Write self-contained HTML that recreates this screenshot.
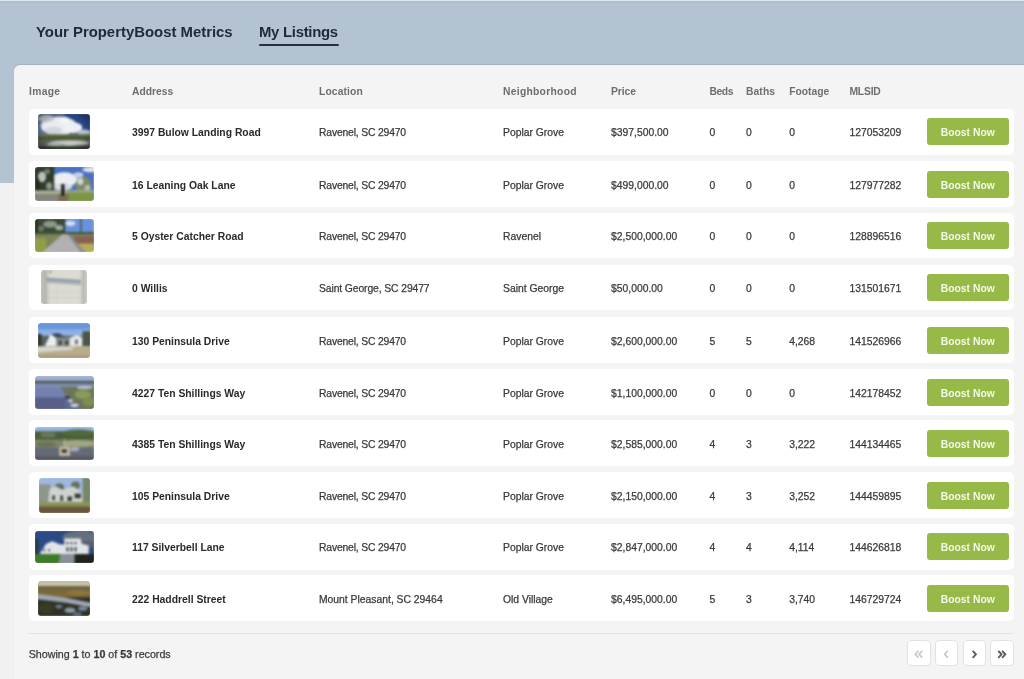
<!DOCTYPE html>
<html><head><meta charset="utf-8"><style>
*{margin:0;padding:0;box-sizing:border-box}
html,body{width:1024px;height:679px;overflow:hidden}
body{background:#f1f1f1;font-family:"Liberation Sans",sans-serif;position:relative}
#wrap{position:absolute;left:0;top:0;width:1024px;height:679px;overflow:hidden;will-change:transform}
.band{position:absolute;left:0;top:0;width:1024px;height:183px;background:#b3c3d1}
.topline{position:absolute;left:0;top:0;width:1024px;height:1px;background:#d9e8f1}.topline2{position:absolute;left:0;top:1px;width:1024px;height:2px;background:#afc0c8}
.tab{position:absolute;font-weight:bold;color:#1f2a36;font-size:14.9px;white-space:nowrap;line-height:1}
.ul{position:absolute;left:259px;top:43.5px;width:79.5px;height:2.5px;background:#253140;border-radius:1px}
.card{position:absolute;left:14px;top:65px;width:1030px;height:640px;background:#f4f4f4;border-radius:6px;box-shadow:0 -0.5px 1px rgba(0,0,0,.1)}
.th{position:absolute;font-weight:bold;color:#6e6e6e;font-size:10.3px;white-space:nowrap;line-height:1}
.row{position:absolute;left:28.5px;width:985.5px;height:45.9px;background:#fff;border-radius:5px}
.td{position:absolute;color:#3a3a3a;font-size:10.35px;white-space:nowrap;line-height:1;-webkit-text-stroke:0.25px #3a3a3a}
.td.b{font-weight:bold;color:#2a2a2a;font-size:10.35px;-webkit-text-stroke:0}
.img{position:absolute;border-radius:3px;overflow:hidden}.img svg{display:block;position:absolute;left:-1px;top:-1px;width:calc(100% + 2px);height:calc(100% + 2px);filter:blur(0.85px)}
.btn{position:absolute;left:927px;width:81.5px;height:27.3px;background:#96b948;border-radius:3px;color:#f5f9ea;font-weight:bold;font-size:10.35px;text-align:center;line-height:29px;white-space:nowrap}
.sep{position:absolute;left:28px;top:633px;width:985px;height:1px;background:#e3e3e3}
.foot{position:absolute;left:28.7px;color:#3a3a3a;font-size:10.7px;white-space:nowrap;line-height:1;-webkit-text-stroke:0.25px #3a3a3a}
.pg{position:absolute;top:640.3px;width:23.5px;height:25.8px;background:#fff;border:1px solid #e2e2e2;border-radius:4px}
.pg svg{position:absolute;left:0;top:0}
</style></head><body><div id="wrap">
<svg width="0" height="0" style="position:absolute"><filter id="bl" x="0" y="0" width="100%" height="100%" filterUnits="objectBoundingBox"><feGaussianBlur stdDeviation="0.75" edgeMode="duplicate"/></filter><radialGradient id="vg" cx="50%" cy="50%" r="60%"><stop offset="65%" stop-color="#000" stop-opacity="0"/><stop offset="100%" stop-color="#000" stop-opacity="0.3"/></radialGradient></svg>
<div class="band"></div><div class="topline"></div><div class="topline2"></div>
<div class="tab" style="left:36px;top:25px">Your PropertyBoost Metrics</div>
<div class="tab" style="left:259px;top:25px;letter-spacing:-0.28px">My Listings</div>
<div class="ul"></div>
<div class="card"></div>
<div class="th" style="left:29px;top:87.4px;letter-spacing:0.309px">Image</div>
<div class="th" style="left:132px;top:87.4px;letter-spacing:0.016px">Address</div>
<div class="th" style="left:319px;top:87.4px;letter-spacing:0.113px">Location</div>
<div class="th" style="left:503px;top:87.4px;letter-spacing:0.286px">Neighborhood</div>
<div class="th" style="left:611px;top:87.4px;letter-spacing:-0.051px">Price</div>
<div class="th" style="left:709.5px;top:87.4px;letter-spacing:-0.396px">Beds</div>
<div class="th" style="left:746px;top:87.4px;letter-spacing:0.098px">Baths</div>
<div class="th" style="left:789.2px;top:87.4px;letter-spacing:-0.008px">Footage</div>
<div class="th" style="left:849.4px;top:87.4px;letter-spacing:-0.162px">MLSID</div>
<div class="row" style="top:108.70px"></div>
<div class="img" style="left:38.1px;top:114.2px;width:52.3px;height:34.8px"><svg viewBox="0 0 60 40" preserveAspectRatio="none"><rect width="60" height="40" fill="#2a4888"/>
<rect x="0" y="0" width="30" height="25" fill="#5a6e94"/>
<ellipse cx="24" cy="14" rx="20" ry="10" fill="#e9ecf0"/>
<ellipse cx="10" cy="6" rx="9" ry="4" fill="#c4cad4"/>
<ellipse cx="40" cy="16" rx="10" ry="6" fill="#eef0f3"/>
<ellipse cx="30" cy="8" rx="6" ry="4" fill="#f4f5f6"/>
<ellipse cx="52" cy="21" rx="8" ry="3" fill="#b8c2d4"/>
<ellipse cx="18" cy="19" rx="10" ry="4" fill="#d2d6dc"/>
<rect x="0" y="23.5" width="60" height="6" fill="#4a5834"/>
<rect x="0" y="23" width="60" height="2" fill="#6a7a52"/>
<rect x="0" y="29" width="60" height="11" fill="#5e665c"/>
<ellipse cx="36" cy="32.5" rx="22" ry="3" fill="#c4c8c2"/>
<ellipse cx="20" cy="34" rx="10" ry="2" fill="#a8aca6"/>
<rect x="0" y="37" width="60" height="3" fill="#262a24"/><rect width="60" height="40" fill="url(#vg)"/></svg></div>
<div class="td b" style="left:132px;top:128.10px">3997 Bulow Landing Road</div>
<div class="td" style="left:319px;top:128.10px;letter-spacing:-0.165px">Ravenel, SC 29470</div>
<div class="td" style="left:503px;top:128.10px">Poplar Grove</div>
<div class="td" style="left:611px;top:128.10px">$397,500.00</div>
<div class="td" style="left:709.5px;top:128.10px">0</div>
<div class="td" style="left:746px;top:128.10px">0</div>
<div class="td" style="left:789.2px;top:128.10px">0</div>
<div class="td" style="left:849.4px;top:128.10px">127053209</div>
<div class="btn" style="top:118.00px">Boost Now</div>
<div class="row" style="top:161.30px"></div>
<div class="img" style="left:35.2px;top:167.0px;width:58.5px;height:34.1px"><svg viewBox="0 0 60 40" preserveAspectRatio="none"><rect width="60" height="40" fill="#4a70c0"/>
<ellipse cx="56" cy="4" rx="8" ry="3" fill="#dfe6f2"/>
<ellipse cx="30" cy="15" rx="13" ry="8" fill="#eceef2"/>
<ellipse cx="28" cy="23" rx="10" ry="4" fill="#d8dce2"/>
<ellipse cx="44" cy="10" rx="5" ry="3" fill="#c8d2e6"/>
<rect x="0" y="0" width="20" height="31" fill="#2e3a2a"/>
<ellipse cx="8" cy="12" rx="4" ry="6" fill="#b8c0b8"/>
<ellipse cx="15" cy="22" rx="3" ry="4" fill="#8e9a8a"/>
<ellipse cx="13" cy="6" rx="3" ry="3" fill="#6e7e6a"/>
<rect x="3" y="14" width="2" height="16" fill="#1a2018"/>
<ellipse cx="49" cy="21" rx="8" ry="9" fill="#7a8c68"/>
<ellipse cx="46" cy="17" rx="3" ry="4" fill="#d0d6d0"/>
<ellipse cx="53" cy="24" rx="3" ry="3" fill="#b6c0ae"/>
<rect x="0" y="27" width="60" height="4" fill="#a8b092"/>
<rect x="32" y="29" width="28" height="11" fill="#7c9648"/>
<rect x="0" y="31" width="26" height="9" fill="#86847c"/>
<rect x="24" y="31" width="10" height="9" fill="#7e6a52"/>
<rect x="27" y="20" width="3.2" height="13" fill="#161a16"/></svg></div>
<div class="td b" style="left:132px;top:180.70px">16 Leaning Oak Lane</div>
<div class="td" style="left:319px;top:180.70px;letter-spacing:-0.165px">Ravenel, SC 29470</div>
<div class="td" style="left:503px;top:180.70px">Poplar Grove</div>
<div class="td" style="left:611px;top:180.70px">$499,000.00</div>
<div class="td" style="left:709.5px;top:180.70px">0</div>
<div class="td" style="left:746px;top:180.70px">0</div>
<div class="td" style="left:789.2px;top:180.70px">0</div>
<div class="td" style="left:849.4px;top:180.70px">127977282</div>
<div class="btn" style="top:170.60px">Boost Now</div>
<div class="row" style="top:212.60px"></div>
<div class="img" style="left:35.2px;top:218.8px;width:58.5px;height:33.2px"><svg viewBox="0 0 60 40" preserveAspectRatio="none"><rect width="60" height="40" fill="#6a92dc"/>
<ellipse cx="36" cy="6" rx="5" ry="3" fill="#d4e0f4"/>
<rect x="0" y="0" width="31" height="17" fill="#3a4834"/>
<ellipse cx="16" cy="7" rx="7" ry="4" fill="#8c968a"/>
<ellipse cx="25" cy="11" rx="4" ry="3" fill="#a0a8a0"/>
<ellipse cx="7" cy="12" rx="3" ry="3" fill="#707a6c"/>
<rect x="0" y="0" width="4" height="26" fill="#26341f"/>
<rect x="46" y="0" width="1.2" height="18" fill="#3a4a34"/>
<rect x="0" y="16" width="60" height="3" fill="#3e5632"/>
<rect x="0" y="18.5" width="60" height="21.5" fill="#7c8658"/>
<rect x="40" y="21" width="20" height="9" fill="#8a5e52"/>
<rect x="44" y="29" width="16" height="11" fill="#b4ae56"/>
<rect x="0" y="23" width="12" height="17" fill="#909e46"/>
<polygon points="28.5,18.5 33,18.5 48,40 7,40" fill="#b2b0b2"/>
<polygon points="33,18.5 35,18.5 52,40 47,40" fill="#8c8a92"/></svg></div>
<div class="td b" style="left:132px;top:232.00px">5 Oyster Catcher Road</div>
<div class="td" style="left:319px;top:232.00px;letter-spacing:-0.165px">Ravenel, SC 29470</div>
<div class="td" style="left:503px;top:232.00px">Ravenel</div>
<div class="td" style="left:611px;top:232.00px">$2,500,000.00</div>
<div class="td" style="left:709.5px;top:232.00px">0</div>
<div class="td" style="left:746px;top:232.00px">0</div>
<div class="td" style="left:789.2px;top:232.00px">0</div>
<div class="td" style="left:849.4px;top:232.00px">128896516</div>
<div class="btn" style="top:221.90px">Boost Now</div>
<div class="row" style="top:264.60px"></div>
<div class="img" style="left:40.6px;top:269.7px;width:46.9px;height:34.6px"><svg viewBox="0 0 60 40" preserveAspectRatio="none"><rect width="60" height="40" fill="#dcdbd3"/>
<rect x="0" y="0" width="9" height="40" fill="#bdbcb6"/>
<rect x="50" y="0" width="10" height="40" fill="#c6c6c0"/>
<rect x="53" y="0" width="0.7" height="40" fill="#9a9a94"/>
<rect x="6" y="0" width="0.7" height="40" fill="#9e9c96"/>
<rect x="10" y="0" width="0.5" height="40" fill="#aaa8a2"/>
<polygon points="8,9.5 50,12 50,17.5 8,15" fill="#a6aeb8"/>
<polygon points="8,10 50,12.5 50,13.8 8,11.3" fill="#7a828c"/>
<rect x="10" y="25" width="40" height="0.5" fill="#c4c4bc"/>
<rect x="10" y="31" width="40" height="0.5" fill="#c4c4bc"/>
<rect x="20" y="18" width="0.5" height="22" fill="#c8c8c0"/>
<rect x="12" y="2" width="2" height="2" fill="#6e6e6a"/></svg></div>
<div class="td b" style="left:132px;top:284.00px">0 Willis</div>
<div class="td" style="left:319px;top:284.00px;letter-spacing:-0.1px">Saint George, SC 29477</div>
<div class="td" style="left:503px;top:284.00px">Saint George</div>
<div class="td" style="left:611px;top:284.00px">$50,000.00</div>
<div class="td" style="left:709.5px;top:284.00px">0</div>
<div class="td" style="left:746px;top:284.00px">0</div>
<div class="td" style="left:789.2px;top:284.00px">0</div>
<div class="td" style="left:849.4px;top:284.00px">131501671</div>
<div class="btn" style="top:273.90px">Boost Now</div>
<div class="row" style="top:317.20px"></div>
<div class="img" style="left:37.7px;top:323.1px;width:52.7px;height:34.9px"><svg viewBox="0 0 60 40" preserveAspectRatio="none"><rect width="60" height="40" fill="#6a94dc"/>
<rect x="0" y="8" width="60" height="8" fill="#8eb0e4"/>
<rect x="0" y="15" width="60" height="12" fill="#58625e"/>
<rect x="0" y="13" width="5" height="15" fill="#2e3a30"/>
<polygon points="8,27 15,13 21,17 21,27" fill="#eceeee"/>
<polygon points="15,13 24,12 32,17 21,17" fill="#404a58"/>
<rect x="21" y="17" width="18" height="10" fill="#8a928c"/>
<rect x="24" y="20" width="3" height="5" fill="#3a4040"/>
<rect x="31" y="20" width="3" height="5" fill="#3a4040"/>
<polygon points="36,17 44,14 50,17 50,27 36,27" fill="#e6e8e8"/>
<rect x="42" y="19" width="2.5" height="5" fill="#505860"/>
<rect x="50" y="10" width="10" height="18" fill="#4a5646"/>
<rect x="0" y="26" width="60" height="14" fill="#b8ac8c"/>
<polygon points="0,27 42,27 38,30 0,33" fill="#d6d6d2"/>
<rect x="0" y="36" width="60" height="4" fill="#aa9c7c"/></svg></div>
<div class="td b" style="left:132px;top:336.60px">130 Peninsula Drive</div>
<div class="td" style="left:319px;top:336.60px;letter-spacing:-0.165px">Ravenel, SC 29470</div>
<div class="td" style="left:503px;top:336.60px">Poplar Grove</div>
<div class="td" style="left:611px;top:336.60px">$2,600,000.00</div>
<div class="td" style="left:709.5px;top:336.60px">5</div>
<div class="td" style="left:746px;top:336.60px">5</div>
<div class="td" style="left:789.2px;top:336.60px">4,268</div>
<div class="td" style="left:849.4px;top:336.60px">141526966</div>
<div class="btn" style="top:326.50px">Boost Now</div>
<div class="row" style="top:369.30px"></div>
<div class="img" style="left:34.9px;top:375.7px;width:58.8px;height:33.6px"><svg viewBox="0 0 60 40" preserveAspectRatio="none"><rect width="60" height="40" fill="#5e6890"/>
<rect x="0" y="0" width="60" height="7" fill="#9eb0d0"/>
<rect x="0" y="6.5" width="60" height="3" fill="#4e585c"/>
<rect x="0" y="9.5" width="60" height="6" fill="#7e8cac"/>
<rect x="0" y="15" width="36" height="10" fill="#7480b0"/>
<polygon points="26,14 60,12 60,40 50,40 36,28" fill="#6a7658"/>
<ellipse cx="48" cy="22" rx="8" ry="5" fill="#8a9a5a"/>
<ellipse cx="54" cy="30" rx="6" ry="5" fill="#7e8e4e"/>
<ellipse cx="50" cy="14" rx="8" ry="2" fill="#b8bcc8"/>
<ellipse cx="33" cy="25" rx="3" ry="1.5" fill="#38383c"/>
<ellipse cx="36" cy="29" rx="2.5" ry="2" fill="#c8c8d0"/>
<ellipse cx="40" cy="34" rx="4" ry="2" fill="#d2d2d6"/>
<rect x="0" y="26" width="30" height="14" fill="#58608a"/></svg></div>
<div class="td b" style="left:132px;top:388.70px">4227 Ten Shillings Way</div>
<div class="td" style="left:319px;top:388.70px;letter-spacing:-0.165px">Ravenel, SC 29470</div>
<div class="td" style="left:503px;top:388.70px">Poplar Grove</div>
<div class="td" style="left:611px;top:388.70px">$1,100,000.00</div>
<div class="td" style="left:709.5px;top:388.70px">0</div>
<div class="td" style="left:746px;top:388.70px">0</div>
<div class="td" style="left:789.2px;top:388.70px">0</div>
<div class="td" style="left:849.4px;top:388.70px">142178452</div>
<div class="btn" style="top:378.60px">Boost Now</div>
<div class="row" style="top:420.30px"></div>
<div class="img" style="left:35.2px;top:426.6px;width:58.5px;height:33.2px"><svg viewBox="0 0 60 40" preserveAspectRatio="none"><rect width="60" height="40" fill="#98b6e4"/>
<rect x="0" y="6" width="60" height="10" fill="#4a5e38"/>
<ellipse cx="44" cy="8" rx="16" ry="4" fill="#4e6a3a"/>
<ellipse cx="14" cy="10" rx="8" ry="3" fill="#6a7a5a"/>
<rect x="0" y="15.5" width="60" height="9.5" fill="#7e866a"/>
<ellipse cx="44" cy="20" rx="16" ry="4" fill="#a0a682"/>
<ellipse cx="12" cy="21" rx="10" ry="3" fill="#6c7258"/>
<rect x="0" y="24.5" width="60" height="15.5" fill="#646a78"/>
<rect x="0" y="34" width="60" height="6" fill="#585a62"/>
<polygon points="25,24 35,23 36,34 25,34" fill="#c4baa2"/>
<rect x="27.5" y="26.5" width="5" height="4" fill="#383838"/>
<rect x="30" y="14" width="0.8" height="10" fill="#c8c0b0"/>
<ellipse cx="40" cy="26.5" rx="5" ry="2.5" fill="#a8acba"/></svg></div>
<div class="td b" style="left:132px;top:439.70px">4385 Ten Shillings Way</div>
<div class="td" style="left:319px;top:439.70px;letter-spacing:-0.165px">Ravenel, SC 29470</div>
<div class="td" style="left:503px;top:439.70px">Poplar Grove</div>
<div class="td" style="left:611px;top:439.70px">$2,585,000.00</div>
<div class="td" style="left:709.5px;top:439.70px">4</div>
<div class="td" style="left:746px;top:439.70px">3</div>
<div class="td" style="left:789.2px;top:439.70px">3,222</div>
<div class="td" style="left:849.4px;top:439.70px">144134465</div>
<div class="btn" style="top:429.60px">Boost Now</div>
<div class="row" style="top:472.30px"></div>
<div class="img" style="left:38.5px;top:477.9px;width:51.6px;height:34.9px"><svg viewBox="0 0 60 40" preserveAspectRatio="none"><rect width="60" height="40" fill="#a0b8de"/>
<rect x="0" y="8" width="14" height="22" fill="#8c968a"/>
<ellipse cx="24" cy="11" rx="5" ry="4" fill="#5c6a60"/>
<ellipse cx="42" cy="9" rx="5" ry="4" fill="#64705e"/>
<polygon points="11,30 13,13 20,10 28,14 40,10 52,20 52,30" fill="#d0d2d0"/>
<rect x="16" y="20" width="3" height="5" fill="#3a403c"/>
<rect x="25" y="20" width="3" height="6" fill="#3a403c"/>
<rect x="33" y="21" width="5" height="5" fill="#3a403c"/>
<rect x="41" y="18" width="7" height="5" fill="#363a38"/>
<rect x="50" y="0" width="10" height="32" fill="#74886a"/>
<rect x="0" y="27" width="60" height="6" fill="#8a9656"/>
<rect x="0" y="32" width="60" height="8" fill="#6a563e"/></svg></div>
<div class="td b" style="left:132px;top:491.70px">105 Peninsula Drive</div>
<div class="td" style="left:319px;top:491.70px;letter-spacing:-0.165px">Ravenel, SC 29470</div>
<div class="td" style="left:503px;top:491.70px">Poplar Grove</div>
<div class="td" style="left:611px;top:491.70px">$2,150,000.00</div>
<div class="td" style="left:709.5px;top:491.70px">4</div>
<div class="td" style="left:746px;top:491.70px">3</div>
<div class="td" style="left:789.2px;top:491.70px">3,252</div>
<div class="td" style="left:849.4px;top:491.70px">144459895</div>
<div class="btn" style="top:481.60px">Boost Now</div>
<div class="row" style="top:523.80px"></div>
<div class="img" style="left:34.9px;top:530.6px;width:58.8px;height:32.4px"><svg viewBox="0 0 60 40" preserveAspectRatio="none"><rect width="60" height="40" fill="#2c4a86"/>
<ellipse cx="46" cy="9" rx="18" ry="8" fill="#64707e"/>
<ellipse cx="52" cy="17" rx="10" ry="4" fill="#54606c"/>
<polygon points="6,27 12,16 18,13 26,17 30,17 30,10 46,10 47,16 54,18 54,28 6,28" fill="#e2e4e8"/>
<rect x="32" y="14" width="2" height="2.5" fill="#3a3e48"/>
<rect x="36" y="14" width="2" height="2.5" fill="#3a3e48"/>
<rect x="40" y="14" width="2" height="2.5" fill="#3a3e48"/>
<rect x="32" y="20" width="2" height="5" fill="#3a3e48"/>
<rect x="36" y="20" width="2" height="5" fill="#3a3e48"/>
<rect x="40" y="20" width="2" height="5" fill="#3a3e48"/>
<rect x="9" y="22" width="2" height="3" fill="#6a6e78"/>
<rect x="14" y="22" width="2" height="3" fill="#6a6e78"/>
<rect x="0" y="10" width="4" height="22" fill="#283e34"/>
<rect x="0" y="28" width="30" height="12" fill="#3e7a28"/>
<polygon points="26,28 40,28 42,40 24,40" fill="#8a9098"/>
<rect x="40" y="28" width="20" height="12" fill="#20241c"/></svg></div>
<div class="td b" style="left:132px;top:543.20px">117 Silverbell Lane</div>
<div class="td" style="left:319px;top:543.20px;letter-spacing:-0.165px">Ravenel, SC 29470</div>
<div class="td" style="left:503px;top:543.20px">Poplar Grove</div>
<div class="td" style="left:611px;top:543.20px">$2,847,000.00</div>
<div class="td" style="left:709.5px;top:543.20px">4</div>
<div class="td" style="left:746px;top:543.20px">4</div>
<div class="td" style="left:789.2px;top:543.20px">4,114</div>
<div class="td" style="left:849.4px;top:543.20px">144626818</div>
<div class="btn" style="top:533.10px">Boost Now</div>
<div class="row" style="top:575.30px"></div>
<div class="img" style="left:37.6px;top:581.0px;width:52.9px;height:34.7px"><svg viewBox="0 0 60 40" preserveAspectRatio="none"><rect width="60" height="40" fill="#2e3226"/>
<rect x="0" y="0" width="60" height="7" fill="#cbc6a8"/>
<rect x="0" y="0" width="60" height="2.5" fill="#b0b4b2"/>
<rect x="0" y="6.5" width="60" height="5" fill="#6e6644"/>
<rect x="0" y="11" width="60" height="8" fill="#7c6838"/>
<ellipse cx="46" cy="14" rx="14" ry="3" fill="#8e7440"/>
<polygon points="0,15 30,19 60,25 60,30 30,24.5 0,21" fill="#9ea6b4"/>
<ellipse cx="36" cy="33" rx="6" ry="3" fill="#8a96a8"/>
<ellipse cx="50" cy="31" rx="5" ry="2.5" fill="#7a88a0"/>
<ellipse cx="24" cy="29" rx="4" ry="2" fill="#6e7a8c"/>
<ellipse cx="44" cy="37" rx="5" ry="2" fill="#5e6a80"/>
<ellipse cx="10" cy="31" rx="8" ry="6" fill="#3a3c24"/></svg></div>
<div class="td b" style="left:132px;top:594.70px">222 Haddrell Street</div>
<div class="td" style="left:319px;top:594.70px">Mount Pleasant, SC 29464</div>
<div class="td" style="left:503px;top:594.70px">Old Village</div>
<div class="td" style="left:611px;top:594.70px">$6,495,000.00</div>
<div class="td" style="left:709.5px;top:594.70px">5</div>
<div class="td" style="left:746px;top:594.70px">3</div>
<div class="td" style="left:789.2px;top:594.70px">3,740</div>
<div class="td" style="left:849.4px;top:594.70px">146729724</div>
<div class="btn" style="top:584.60px">Boost Now</div>
<div class="sep"></div>
<div class="foot" style="top:649px">Showing <b>1</b> to <b>10</b> of <b>53</b> records</div>
<div class="pg" style="left:907px"><svg width="23" height="25" viewBox="1.5 0 23 25"><path d="M12 9.8 L8.8 13.3 L12 16.8 M15.8 9.8 L12.6 13.3 L15.8 16.8" fill="none" stroke="#c4c4c4" stroke-width="1.6"/></svg></div>
<div class="pg" style="left:934.5px"><svg width="23" height="25" viewBox="1.5 0 23 25"><path d="M13.3 9.8 L10.2 13.3 L13.3 16.8" fill="none" stroke="#c4c4c4" stroke-width="1.6"/></svg></div>
<div class="pg" style="left:962.5px"><svg width="23" height="25" viewBox="1.5 0 23 25"><path d="M10.2 9.8 L13.4 13.3 L10.2 16.8" fill="none" stroke="#5a5a5a" stroke-width="1.9"/></svg></div>
<div class="pg" style="left:990.3px"><svg width="23" height="25" viewBox="1.5 0 23 25"><path d="M8.8 9.8 L12 13.3 L8.8 16.8 M12.6 9.8 L15.8 13.3 L12.6 16.8" fill="none" stroke="#5a5a5a" stroke-width="1.9"/></svg></div>
</div></body></html>
